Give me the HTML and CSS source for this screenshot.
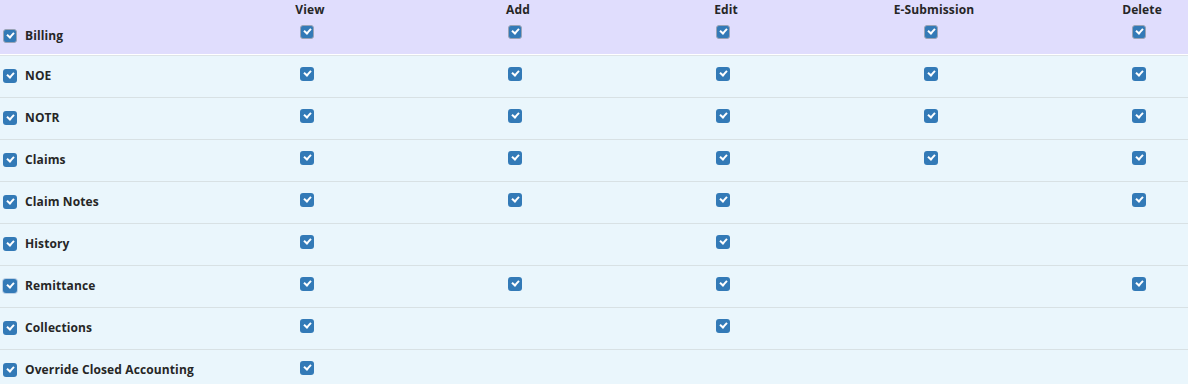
FILE: index.html
```html
<!DOCTYPE html>
<html>
<head>
<meta charset="utf-8">
<link rel="stylesheet" href="styles.css">
</head>
<body>
<div class="perm-table">
  <div class="row head">
    <div class="label"><span class="cb cb-head"></span>Billing</div>
    <div class="col"><span class="title">View</span><span class="cb cb-head"></span></div>
    <div class="col"><span class="title">Add</span><span class="cb cb-head"></span></div>
    <div class="col"><span class="title">Edit</span><span class="cb cb-head"></span></div>
    <div class="col"><span class="title">E-Submission</span><span class="cb cb-head"></span></div>
    <div class="col"><span class="title">Delete</span><span class="cb cb-head"></span></div>
  </div>
  <div class="row">
    <div class="label"><span class="cb"></span>NOE</div>
    <div class="col"><span class="cb"></span></div>
    <div class="col"><span class="cb"></span></div>
    <div class="col"><span class="cb"></span></div>
    <div class="col"><span class="cb"></span></div>
    <div class="col"><span class="cb"></span></div>
  </div>
  <div class="row">
    <div class="label"><span class="cb"></span>NOTR</div>
    <div class="col"><span class="cb"></span></div>
    <div class="col"><span class="cb"></span></div>
    <div class="col"><span class="cb"></span></div>
    <div class="col"><span class="cb"></span></div>
    <div class="col"><span class="cb"></span></div>
  </div>
  <div class="row">
    <div class="label"><span class="cb"></span>Claims</div>
    <div class="col"><span class="cb"></span></div>
    <div class="col"><span class="cb"></span></div>
    <div class="col"><span class="cb"></span></div>
    <div class="col"><span class="cb"></span></div>
    <div class="col"><span class="cb"></span></div>
  </div>
  <div class="row">
    <div class="label"><span class="cb"></span>Claim Notes</div>
    <div class="col"><span class="cb"></span></div>
    <div class="col"><span class="cb"></span></div>
    <div class="col"><span class="cb"></span></div>
    <div class="col"></div>
    <div class="col"><span class="cb"></span></div>
  </div>
  <div class="row">
    <div class="label"><span class="cb"></span>History</div>
    <div class="col"><span class="cb"></span></div>
    <div class="col"></div>
    <div class="col"><span class="cb"></span></div>
    <div class="col"></div>
    <div class="col"></div>
  </div>
  <div class="row">
    <div class="label"><span class="cb cb-focus"></span>Remittance</div>
    <div class="col"><span class="cb"></span></div>
    <div class="col"><span class="cb"></span></div>
    <div class="col"><span class="cb"></span></div>
    <div class="col"></div>
    <div class="col"><span class="cb"></span></div>
  </div>
  <div class="row">
    <div class="label"><span class="cb"></span>Collections</div>
    <div class="col"><span class="cb"></span></div>
    <div class="col"></div>
    <div class="col"><span class="cb"></span></div>
    <div class="col"></div>
    <div class="col"></div>
  </div>
  <div class="row">
    <div class="label"><span class="cb"></span>Override Closed Accounting</div>
    <div class="col"><span class="cb"></span></div>
    <div class="col"></div>
    <div class="col"></div>
    <div class="col"></div>
    <div class="col"></div>
  </div>
</div>
</body>
</html>
```
FILE: styles.css
```css
html, body {
  margin: 0;
  padding: 0;
  overflow: hidden;
  background: #eaf6fc;
}
body {
  font-family: "Open Sans", "Liberation Sans", sans-serif;
  font-size: 12px;
  font-weight: 700;
  letter-spacing: 0.12px;
  color: #262626;
}
.perm-table {
  width: 1243px;
}
.row {
  display: grid;
  grid-template-columns: 203px repeat(5, 208px);
  height: 41px;
  border-bottom: 1px solid #d8e1e4;
  background: #eaf6fc;
}
.row.head {
  height: 54px;
  background: #e0ddfd;
  border-bottom: 1px solid #ffffff;
  box-shadow: 0 1px 0 #dde4e7;
  margin-bottom: 1px;
}
.label {
  display: flex;
  align-items: center;
  gap: 8px;
  padding-left: 3px;
  padding-bottom: 2px;
}
.head .label {
  padding-top: 18px;
  padding-bottom: 1px;
}
.col {
  display: flex;
  flex-direction: column;
  align-items: center;
  justify-content: center;
  padding-bottom: 6px;
}
.head .col {
  justify-content: flex-start;
  padding-top: 1px;
  gap: 7px;
}
.title {
  line-height: 17px;
  margin-left: 6px;
}
.cb {
  width: 14px;
  height: 14px;
  border-radius: 3px;
  background: #337ab7;
  position: relative;
  flex: none;
  box-sizing: border-box;
}
.cb::after {
  content: "";
  position: absolute;
  left: 4px;
  top: 3px;
  width: 5px;
  height: 3px;
  border-left: 2px solid #fff;
  border-bottom: 2px solid #fff;
  transform: rotate(-48deg);
}
.cb-head {
  border: 1px solid #9aa3b5;
}
.cb-head::after {
  left: 3px;
  top: 2px;
}
.cb-focus {
  box-shadow: 0 0 0 1px #bcd1e6;
}
```
